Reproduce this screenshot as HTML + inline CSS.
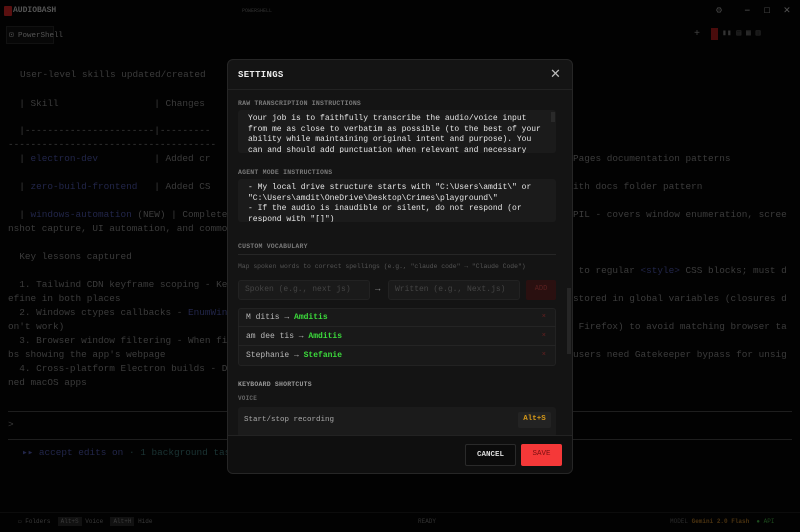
<!DOCTYPE html>
<html><head><meta charset="utf-8"><style>
*{margin:0;padding:0;box-sizing:border-box}
body{width:800px;height:532px;background:#020202;overflow:hidden;position:relative;font-family:"Liberation Mono",monospace;color:#3e3e3e}
.a{position:absolute;white-space:pre}
.t{font-size:9.4px;color:#3c3c3c;left:8px}
.b{color:#22264a}
.m{position:absolute;left:227px;top:59px;width:346px;height:415px;background:#141414;border:1px solid #262626;border-radius:6px;overflow:hidden}
.lbl{position:absolute;left:10px;font-size:6.5px;font-weight:bold;color:#7a7a7a;letter-spacing:.2px}
.ta{position:absolute;left:10px;width:318px;background:#1b1b1b;border-radius:3px;font-size:8px;line-height:10.7px;color:#e6e6e6;padding:4px 10px;overflow:hidden;white-space:pre}
.sb{position:absolute;right:3px;width:4px;background:#2a2a2a}
.row{position:absolute;left:10px;width:318px;height:19px;font-size:8px;color:#b8b8b8;padding:5px 8px;border-bottom:1px solid #242424}
.g{color:#3cdc3c;font-weight:bold}
.x{position:absolute;right:10px;top:5px;color:#6a2020;font-size:7px}
</style></head><body>
<div class="a" style="left:4px;top:6px;width:8px;height:10px;background:#5a1010;border-radius:1px"></div>
<div class="a" style="left:13px;top:6px;font-size:8px;font-weight:bold;color:#555">AUDIOBASH</div>
<div class="a" style="left:242px;top:8px;font-size:5px;color:#333">POWERSHELL</div>
<div class="a" style="left:716px;top:5px;font-size:10px;color:#444">⚙</div>
<div class="a" style="left:744px;top:3px;font-size:11px;color:#555">–  ☐  ✕</div>
<div class="a" style="left:6px;top:26px;width:48px;height:18px;border:1px solid #111;background:#070707"></div>
<div class="a" style="left:9px;top:30px;font-size:7.5px;color:#555">⊡ PowerShell</div>
<div class="a" style="left:694px;top:29px;font-size:10px;color:#444">+</div>
<div class="a" style="left:711px;top:28px;width:7px;height:12px;background:#4a0c0c"></div>
<div class="a" style="left:722px;top:28px;font-size:8px;color:#333">▮▮ ▤ ▦ ▥</div>

<div class="a t" style="left:20px;top:69px">User-level skills updated/created</div>
<div class="a t" style="top:98px">  | Skill                 | Changes</div>
<div class="a t" style="top:125px">  |-----------------------|---------</div>
<div class="a t" style="top:139px">-------------------------------------</div>
<div class="a t" style="top:153px">  | <span class="b">electron-dev</span>          | Added cr</div>
<div class="a t" style="top:181px">  | <span class="b">zero-build-frontend</span>   | Added CS</div>
<div class="a t" style="top:209px">  | <span class="b">windows-automation</span> (NEW) | Complete</div>
<div class="a t" style="top:223px">nshot capture, UI automation, and commo</div>
<div class="a t" style="top:251px">  Key lessons captured</div>
<div class="a t" style="top:279px">  1. Tailwind CDN keyframe scoping - Ke</div>
<div class="a t" style="top:293px">efine in both places</div>
<div class="a t" style="top:307px">  2. Windows ctypes callbacks - <span class="b">EnumWin</span></div>
<div class="a t" style="top:321px">on't work)</div>
<div class="a t" style="top:335px">  3. Browser window filtering - When fi</div>
<div class="a t" style="top:349px">bs showing the app's webpage</div>
<div class="a t" style="top:363px">  4. Cross-platform Electron builds - D</div>
<div class="a t" style="top:377px">ned macOS apps</div>
<div class="a t" style="left:573px;top:153px">Pages documentation patterns</div>
<div class="a t" style="left:573px;top:181px">ith docs folder pattern</div>
<div class="a t" style="left:573px;top:209px">PIL - covers window enumeration, scree</div>
<div class="a t" style="left:573px;top:265px"> to regular <span class="b">&lt;style&gt;</span> CSS blocks; must d</div>
<div class="a t" style="left:573px;top:293px">stored in global variables (closures d</div>
<div class="a t" style="left:573px;top:321px"> Firefox) to avoid matching browser ta</div>
<div class="a t" style="left:573px;top:349px">users need Gatekeeper bypass for unsig</div>
<div class="a" style="left:8px;top:411px;width:784px;border-top:1px solid #1e1e1e"></div>
<div class="a t" style="top:419px">&gt;</div>
<div class="a" style="left:8px;top:439px;width:784px;border-top:1px solid #1e1e1e"></div>
<div class="a t" style="left:22px;top:447px;color:#1b3434"><span style="color:#22264a">▸▸ accept edits on</span> · 1 background tas</div>
<div class="a" style="left:0;top:512px;width:800px;height:20px;border-top:1px solid #0c0c0c"></div>
<div class="a" style="left:18px;top:518px;font-size:6px;color:#3a3a3a">▭ Folders  <span style="background:#111;padding:1px 3px">Alt+S</span> Voice  <span style="background:#111;padding:1px 3px">Alt+H</span> Hide</div>
<div class="a" style="left:418px;top:518px;font-size:6px;color:#333">READY</div>
<div class="a" style="left:670px;top:518px;font-size:6px;color:#2a2a2a">MODEL <span style="color:#4a3210;font-weight:bold">Gemini 2.0 Flash</span>  <span style="color:#1d4a1d">● API</span></div>

<div class="m">
<div class="a" style="left:10px;top:10px;font-size:9px;font-weight:bold;color:#eee;letter-spacing:.3px">SETTINGS</div>
<div class="a" style="left:322px;top:6px;font-size:13px;color:#bbb;font-family:'Liberation Sans',sans-serif">✕</div>
<div class="a" style="left:0;top:29px;width:346px;border-top:1px solid #222"></div>
<div class="lbl" style="top:40px">RAW TRANSCRIPTION INSTRUCTIONS</div>
<div class="ta" style="top:50px;height:43px">Your job is to faithfully transcribe the audio/voice input
from me as close to verbatim as possible (to the best of your
ability while maintaining original intent and purpose). You
can and should add punctuation when relevant and necessary</div>
<div class="sb" style="left:323px;top:52px;height:10px"></div>
<div class="lbl" style="top:109px">AGENT MODE INSTRUCTIONS</div>
<div class="ta" style="top:119px;height:43px">- My local drive structure starts with "C:\Users\amdit\" or
"C:\Users\amdit\OneDrive\Desktop\Crimes\playground\"
- If the audio is inaudible or silent, do not respond (or
respond with "[]")</div>
<div class="lbl" style="top:183px">CUSTOM VOCABULARY</div>
<div class="a" style="left:10px;top:194px;width:318px;border-top:1px solid #262626"></div>
<div class="a" style="left:10px;top:203px;font-size:6.4px;color:#555">Map spoken words to correct spellings (e.g., "claude code" → "Claude Code")</div>
<div class="a" style="left:10px;top:220px;width:132px;height:20px;background:#1a1a1a;border:1px solid #222;border-radius:3px;font-size:8px;color:#444;padding:4px 6px">Spoken (e.g., next js)</div>
<div class="a" style="left:147px;top:224px;font-size:9px;color:#888">→</div>
<div class="a" style="left:160px;top:220px;width:132px;height:20px;background:#1a1a1a;border:1px solid #222;border-radius:3px;font-size:8px;color:#444;padding:4px 6px">Written (e.g., Next.js)</div>
<div class="a" style="left:298px;top:220px;width:30px;height:20px;background:#2a1010;border-radius:2px;font-size:7px;color:#5a2020;text-align:center;padding-top:5px">ADD</div>
<div class="a" style="left:10px;top:248px;width:318px;height:58px;background:#191919;border:1px solid #222;border-radius:3px"></div>
<div class="row" style="top:248px">M ditis → <span class="g">Amditis</span><span class="x">×</span></div>
<div class="row" style="top:267px">am dee tis → <span class="g">Amditis</span><span class="x">×</span></div>
<div class="row" style="top:286px;border:none">Stephanie → <span class="g">Stefanie</span><span class="x">×</span></div>
<div class="sb" style="left:339px;top:228px;height:66px;background:#262626"></div>
<div class="lbl" style="top:321px;color:#999">KEYBOARD SHORTCUTS</div>
<div class="lbl" style="top:335px;font-size:6px;color:#666">VOICE</div>
<div class="a" style="left:10px;top:347px;width:318px;height:30px;background:#1b1b1b;border-radius:3px"></div>
<div class="a" style="left:16px;top:356px;font-size:7.5px;color:#aaa">Start/stop recording</div>
<div class="a" style="left:290px;top:352px;width:33px;height:16px;background:#232323;border-radius:2px;font-size:7.5px;color:#d89a18;font-weight:bold;text-align:center;padding-top:3px">Alt+S</div>
<div class="a" style="left:0;top:375px;width:346px;height:40px;background:#0f0f0f;border-top:1px solid #222"></div>
<div class="a" style="left:237px;top:384px;width:51px;height:22px;background:#0b0b0b;border:1px solid #2a2a2a;border-radius:2px;font-size:7.5px;font-weight:bold;color:#ddd;text-align:center;padding-top:6px">CANCEL</div>
<div class="a" style="left:293px;top:384px;width:41px;height:22px;background:#f53838;border-radius:2px;font-size:7.5px;color:#7a1010;text-align:center;padding-top:6px">SAVE</div>
</div>
</body></html>
